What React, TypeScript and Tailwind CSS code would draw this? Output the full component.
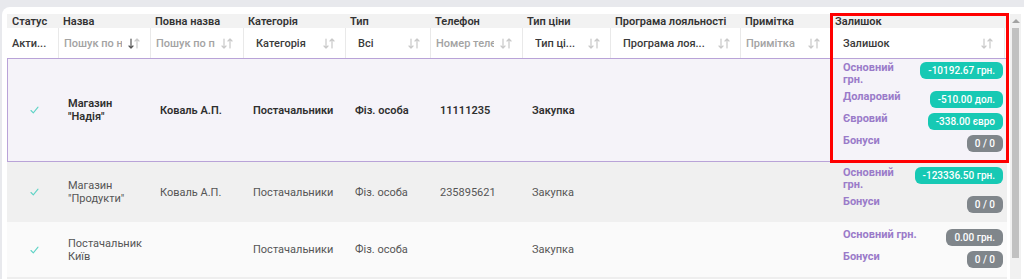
import { ReactNode } from 'react'

const cols = 'grid grid-cols-[51px_92px_93px_102px_85px_92px_88px_130px_90px_177px]'

interface Balance {
  label: string
  value: string
  gray?: boolean
}

interface Row {
  name: [string, string]
  owner: string
  category: string
  type: string
  phone: string
  price: string
  balances: Balance[]
  rowCls: string
  balCls: string
}

const rows: Row[] = [
  {
    name: ['Магазин', '"Надія"'],
    owner: 'Коваль А.П.',
    category: 'Постачальники',
    type: 'Фіз. особа',
    phone: '11111235',
    price: 'Закупка',
    rowCls: 'h-[104px] bg-[#f5f3f9] shadow-[inset_0_0_0_1px_#b9a3d8] font-semibold text-[#2f2f2f]',
    balCls: 'pt-[4px]',
    balances: [
      { label: 'Основний грн.', value: '-10192.67 грн.' },
      { label: 'Доларовий', value: '-510.00 дол.' },
      { label: 'Євровий', value: '-338.00 євро' },
      { label: 'Бонуси', value: '0 / 0', gray: true },
    ],
  },
  {
    name: ['Магазин', '"Продукти"'],
    owner: 'Коваль А.П.',
    category: 'Постачальники',
    type: 'Фіз. особа',
    phone: '235895621',
    price: 'Закупка',
    rowCls: 'h-[60px] bg-[#f0f0f0] text-[#555]',
    balCls: 'pt-[5px]',
    balances: [
      { label: 'Основний грн.', value: '-123336.50 грн.' },
      { label: 'Бонуси', value: '0 / 0', gray: true },
    ],
  },
  {
    name: ['Постачальник', 'Київ'],
    owner: '',
    category: 'Постачальники',
    type: 'Фіз. особа',
    phone: '',
    price: 'Закупка',
    rowCls: 'h-[55px] bg-[#fafafa] text-[#555]',
    balCls: 'pt-[7px]',
    balances: [
      { label: 'Основний грн.', value: '0.00 грн.', gray: true },
      { label: 'Бонуси', value: '0 / 0', gray: true },
    ],
  },
]

function SortIcon({ active }: { active?: boolean }) {
  return (
    <svg width="12" height="11" viewBox="0 0 12 11" fill="none" strokeWidth="1.2" strokeLinecap="round" strokeLinejoin="round" className="shrink-0">
      <g stroke={active ? '#555' : '#c9c9c9'}>
        <path d="M3 1v9M1 8l2 2 2-2" />
      </g>
      <g stroke="#c9c9c9">
        <path d="M9 10V1M7 3l2-2 2 2" />
      </g>
    </svg>
  )
}

function FilterCell({ children, placeholder, select, active }: {
  children: ReactNode
  placeholder?: boolean
  select?: boolean
  active?: boolean
}) {
  return (
    <div className={`flex items-center border-l border-[#e9e9e9] pr-[10px] ${select ? 'pl-[12px]' : 'pl-[5px]'}`}>
      <span
        className={`mr-[6px] min-w-0 flex-1 overflow-hidden whitespace-nowrap ${placeholder ? 'text-[#a3a3a3]' : 'text-[#3a3a3a]'}`}
      >
        {children}
      </span>
      <SortIcon active={active} />
    </div>
  )
}

function Check() {
  return (
    <svg width="9" height="8" viewBox="0 0 9 8" fill="none">
      <path d="M1 4.5l2.3 2.3L8 1.2" stroke="#5fd3c6" strokeWidth="1.1" strokeLinecap="round" strokeLinejoin="round" />
    </svg>
  )
}

export default function App() {
  return (
    <div className="h-[279px] w-[1024px] overflow-hidden bg-[#e8e9ed] pl-[2px] pt-[7px] font-['Roboto',sans-serif] text-[11px] leading-[13px]">
      <div className="flex h-full rounded-tl-lg bg-white pl-[5px] pt-[7px]">
        <div className="relative w-[1000px] shrink-0">
          <div className={`${cols} h-[14px] items-center bg-[#f2f2f2] font-semibold text-[#333]`}>
            {['Статус', 'Назва', 'Повна назва', 'Категорія', 'Тип', 'Телефон', 'Тип ціни', 'Програма лояльності', 'Примітка', 'Залишок'].map((h) => (
              <div key={h} className="truncate pl-[5px]">
                {h}
              </div>
            ))}
          </div>

          <div className={`${cols} h-[30px] bg-white font-medium`}>
            <div className="flex items-center whitespace-nowrap pl-[5px] text-[#3a3a3a]">Акти...</div>
            <FilterCell placeholder active>
              Пошук по назві
            </FilterCell>
            <FilterCell placeholder>Пошук по повній назві</FilterCell>
            <FilterCell select>Категорія</FilterCell>
            <FilterCell select>Всі</FilterCell>
            <FilterCell placeholder>Номер телефону</FilterCell>
            <FilterCell select>Тип ці...</FilterCell>
            <FilterCell select>Програма лоя...</FilterCell>
            <FilterCell placeholder>Примітка</FilterCell>
            <div className="mr-[2px] flex items-center border-x border-[#e9e9e9] pl-[12px] pr-[11px]">
              <span className="flex-1 text-[#3a3a3a]">Залишок</span>
              <SortIcon />
            </div>
          </div>

          {rows.map((r) => (
            <div key={r.name.join(' ')} className={`${cols} ${r.rowCls}`}>
              <div className="flex items-center justify-center pl-[3px]">
                <Check />
              </div>
              <div className="flex flex-col justify-center pl-[10px]">
                <span>{r.name[0]}</span>
                <span>{r.name[1]}</span>
              </div>
              <div className="flex items-center pl-[10px]">{r.owner}</div>
              <div className="flex items-center pl-[10px]">{r.category}</div>
              <div className="flex items-center pl-[10px]">{r.type}</div>
              <div className="flex items-center pl-[10px]">{r.phone}</div>
              <div className="flex items-center pl-[10px]">{r.price}</div>
              <div />
              <div />
              <div className={`flex flex-col gap-[5px] pl-[13px] pr-[4px] ${r.balCls}`}>
                {r.balances.map((b) => (
                  <div key={b.label} className="flex items-start justify-between gap-2">
                    <span className="min-w-0 text-[11px] font-bold leading-[12px] text-[#9a7bc9]">{b.label}</span>
                    <span
                      className={`h-[17px] shrink-0 whitespace-nowrap rounded-[6px] px-2 text-[10px] font-medium leading-[17px] text-white ${b.gray ? 'bg-[#80868b]' : 'bg-[#17c9b4]'}`}
                    >
                      {b.value}
                    </span>
                  </div>
                ))}
              </div>
            </div>
          ))}
          <div className="h-[10px] bg-[#eeeeee]" />

          <div className="pointer-events-none absolute -top-px left-[823px] h-[150px] w-[179px] border-[3px] border-[#ff0000]" />
        </div>

        <div className="ml-[3px] flex w-[11px] shrink-0 flex-col items-center bg-[#f1f1f1]">
          <div className="mt-[5px] h-0 w-0 border-x-[4px] border-b-[4px] border-x-transparent border-b-[#a3a3a3]" />
          <div className="mt-[5px] h-[230px] w-[7px] bg-[#c1c1c1]" />
        </div>
      </div>
    </div>
  )
}
